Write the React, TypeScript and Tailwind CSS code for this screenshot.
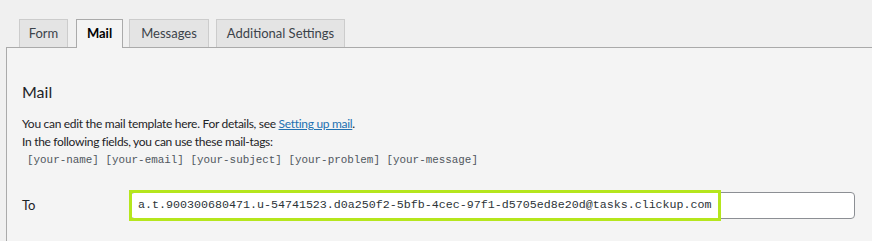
const tabs = [
  { label: "Form", w: "w-[49px] ml-[13px]" },
  { label: "Mail", w: "w-[47px] ml-[8px]", active: true },
  { label: "Messages", w: "w-[80px] ml-[6px]" },
  { label: "Additional Settings", w: "w-[129px] ml-[7px]" },
];

export default function App() {
  return (
    <div className="h-[241px] w-[872px] overflow-hidden bg-[#f0f0f0] pt-[19px] pl-[6px] font-['Lato',sans-serif] text-[#1d2327]">
      <div className="flex">
        {tabs.map((t) => (
          <div
            key={t.label}
            className={
              t.active
                ? `${t.w} relative z-10 flex h-[29px] items-center justify-center border border-b-0 border-[#aaa] bg-[#f4f4f4] pb-[1px] text-[13px] font-bold text-black`
                : `${t.w} flex h-[28px] items-center justify-center border border-b-0 border-[#ccc] bg-[#e4e4e4] text-[13px] text-[#3c434a]`
            }
          >
            {t.label}
          </div>
        ))}
      </div>
      <div className="-mt-px h-[200px] border-t border-l border-[#aaa] bg-[#f4f4f4] pl-[15px]">
        <h2 className="pt-[34px] text-[16px] leading-[20px] text-[#1d2327]">
          Mail
        </h2>
        <div className="mt-[13px] text-[12px] leading-[18px] tracking-[-0.3px] text-[#1d2327]">
          <p>
            You can edit the mail template here. For details, see{" "}
            <a href="#" className="text-[#2271b1] underline">
              Setting up mail
            </a>
            .
          </p>
          <p>In the following fields, you can use these mail-tags:</p>
          <p className="pl-[5px] font-['Liberation_Mono',monospace] text-[10.9px] tracking-normal text-[#50575e]">
            [your-name] [your-email] [your-subject] [your-problem] [your-message]
          </p>
        </div>
        <div className="mt-[23px] flex items-center">
          <label className="w-[108px] text-[13px] text-[#1d2327]">To</label>
          <div className="relative">
            <div className="flex h-[27px] w-[725px] items-center rounded-[4px] border border-[#8c8f94] bg-white pl-[7px] font-['Liberation_Mono',monospace] text-[11.66px] text-[#2c3338]">
              a.t.900300680471.u-54741523.d0a250f2-5bfb-4cec-97f1-d5705ed8e20d@tasks.clickup.com
            </div>
            <div className="absolute -top-[2px] -left-[1px] h-[31px] w-[592px] border-[3px] border-[#b5e61d]" />
          </div>
        </div>
      </div>
    </div>
  );
}
